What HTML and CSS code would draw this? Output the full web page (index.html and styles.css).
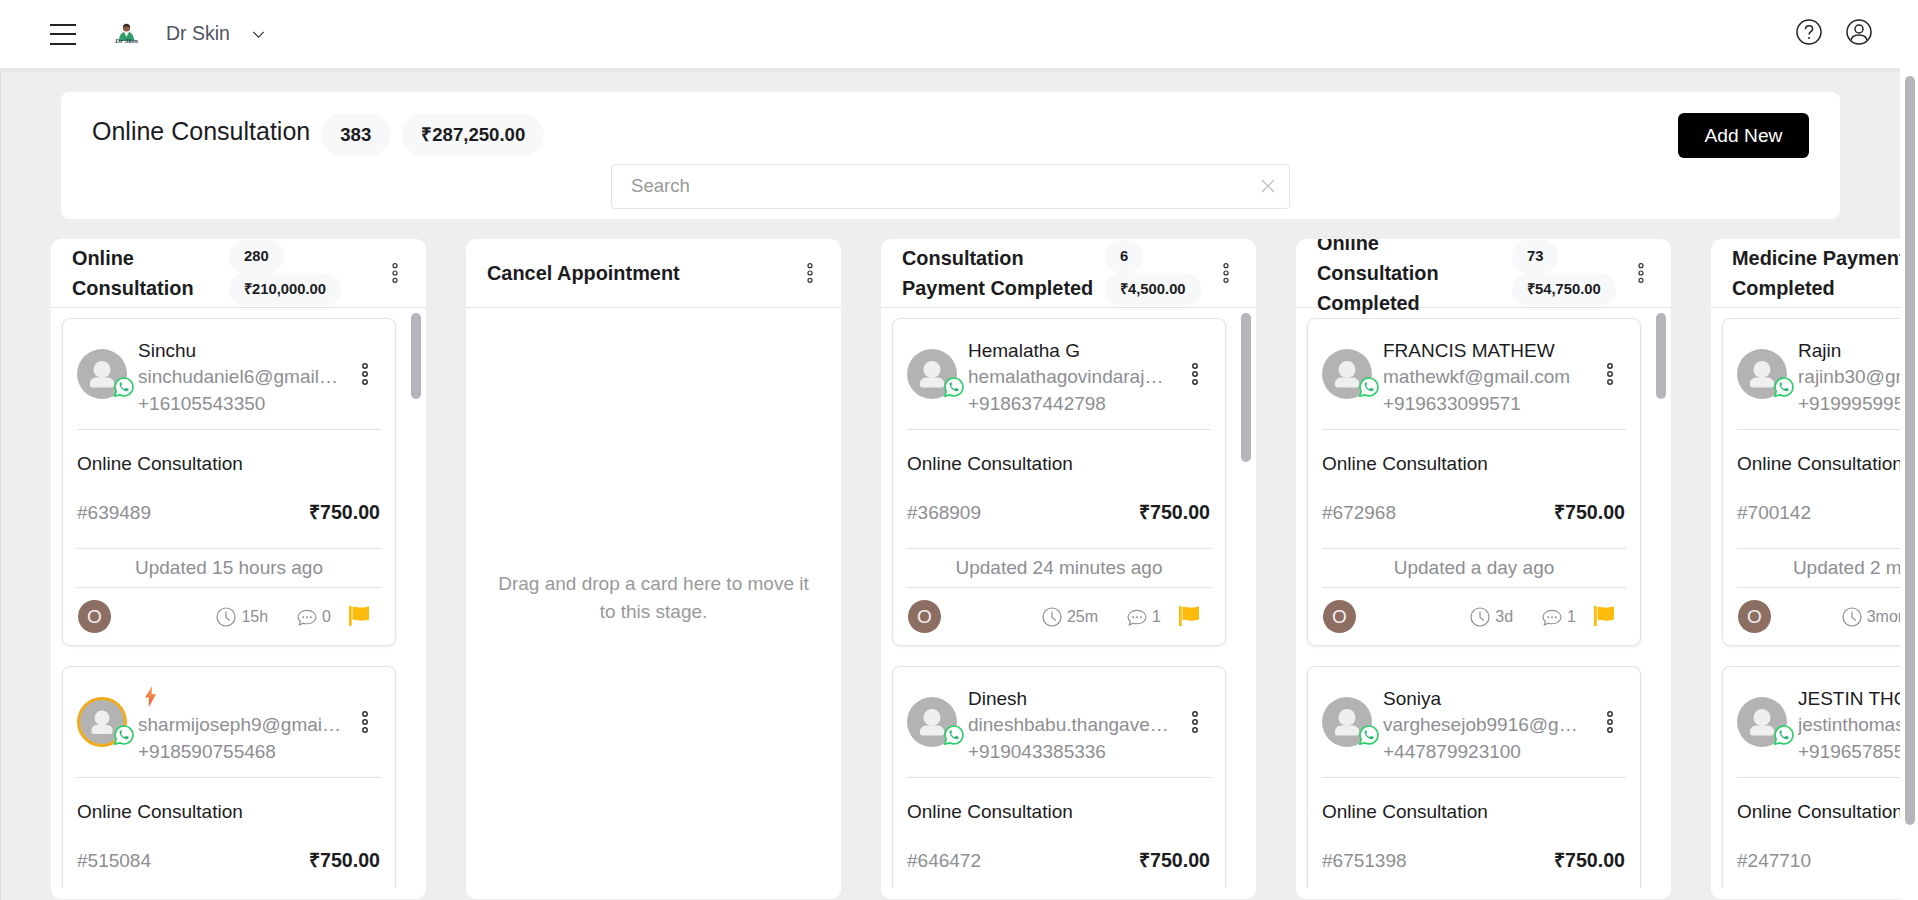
FILE: index.html
```html
<!DOCTYPE html>
<html lang="en">
<head>
  <meta charset="UTF-8">
  <title>Online Consultation</title>
  <link rel="stylesheet" href="styles.css">
</head>
<body>

  <svg class="sprite" width="0" height="0">
    <defs>
      <linearGradient id="bolt-fill" x1="0" y1="0" x2="0" y2="1">
        <stop offset="0" stop-color="#f8a24c"/>
        <stop offset="1" stop-color="#e85c3c"/>
      </linearGradient>
    </defs>
    <symbol id="i-dots" viewBox="0 0 10 24">
      <circle cx="5" cy="4" r="2.2"/><circle cx="5" cy="12" r="2.2"/><circle cx="5" cy="20" r="2.2"/>
    </symbol>
    <symbol id="i-person" viewBox="0 0 50 50">
      <circle cx="25" cy="20.500" r="8.500" fill="#efefef"/>
      <path d="M13 36v-2c0-3.500 3.500-5.500 7-5.500h10c3.500 0 7 2 7 5.500v2c0 1.500-1 2.500-2.500 2.500h-19C14 38.500 13 37.500 13 36z" fill="#efefef"/>
    </symbol>
    <symbol id="i-whatsapp" viewBox="0 0 24 24">
      <path d="M1 23l1.600-6A10.700 10.700 0 1 1 7 21.400z" fill="#fff" stroke="#2bd06a" stroke-width="2"/>
      <path d="M8.500 6.300c-.6 0-1.500.7-1.700 1.900-.3 1.700.7 4 2.500 5.900 2 2.100 4.400 3.200 6.100 3 1.300-.2 2.200-1.200 2.200-2.100 0-.4-.1-.6-.4-.8l-2.300-1.100c-.3-.1-.6-.1-.8.100l-.9 1.100c-.2.200-.4.200-.7.100-1.800-.8-3.100-2.100-3.800-3.700-.1-.3-.1-.5.100-.7l.7-.9c.2-.2.200-.5.100-.8l-.9-2.100c-.1-.3-.3-.4-.7-.4z" fill="#2bb673"/>
    </symbol>
    <symbol id="i-clock" viewBox="0 0 20 20">
      <circle cx="10" cy="10" r="9" fill="none" stroke="#8e8e93" stroke-width="1.200"/>
      <path d="M10 4.500V10.500l3.800 3" fill="none" stroke="#8e8e93" stroke-width="1.200"/>
    </symbol>
    <symbol id="i-comment" viewBox="0 0 20 18">
      <path d="M2.300 17l1.100-3.500C1.900 12.300 1 10.800 1 9.100 1 5.400 5 2.400 10 2.400s9 3 9 6.700-4 6.700-9 6.700c-1.300 0-2.600-.2-3.700-.6z" fill="none" stroke="#8e8e93" stroke-width="1.100"/>
      <circle cx="6.200" cy="9.200" r="1" fill="#8e8e93"/><circle cx="10" cy="9.200" r="1" fill="#8e8e93"/><circle cx="13.800" cy="9.200" r="1" fill="#8e8e93"/>
    </symbol>
    <symbol id="i-flag" viewBox="0 0 20 20">
      <rect x="0" y="0" width="2.700" height="20" fill="#fdbb0b"/>
      <path d="M3.500 1c3-1 5 .6 8.500.6 3 0 5-.6 8-1.300v13.200c-2.500.8-5 1.200-8 1.200-3.500 0-5.500-1.500-8.500-.6z" fill="#fdbb0b"/>
    </symbol>
    <symbol id="i-bolt" viewBox="0 0 10 19">
      <path d="M6.500 0L0 10.500h3.500L3.500 19 10 7.500H6z" fill="url(#bolt-fill)"/>
    </symbol>
  </svg>

  <header class="topbar">
    <div class="topbar-left">
      <div class="hamburger"><span></span><span></span><span></span></div>
      <svg class="logo" viewBox="0 0 27 22" width="27" height="22">
        <path d="M6 18c0-5 2-8 5-9h5c3 1 5 4 5 9z" fill="#2e9e6b"/>
        <path d="M11 9l2.500 5L16 9z" fill="#f2f2f2"/>
        <circle cx="13.500" cy="5" r="3.600" fill="#8a5a44"/>
        <path d="M9.900 4.500C10 1.500 12 .8 13.500.8S17 1.500 17.100 4.500C15 3 12 3 9.900 4.500z" fill="#3b2c28"/>
        <text class="logo-text" x="13.500" y="20">Dr Skin</text>
      </svg>
      <span class="brand">Dr Skin</span>
      <svg class="chevron" viewBox="0 0 14 8" width="13" height="7">
        <path d="M1 1l6 6 6-6" fill="none" stroke="#333" stroke-width="1.300"/>
      </svg>
    </div>
    <div class="topbar-right">
      <svg viewBox="0 0 26 26" width="26" height="26">
        <circle cx="13" cy="13" r="12" fill="none" stroke="#222" stroke-width="1.500"/>
        <path d="M9.500 10.200c0-2 1.600-3.500 3.600-3.500s3.500 1.400 3.500 3.200c0 2.600-3.600 2.800-3.600 5.600" fill="none" stroke="#222" stroke-width="1.500"/>
        <circle cx="13" cy="19" r="1" fill="#222"/>
      </svg>
      <svg viewBox="0 0 26 26" width="26" height="26">
        <circle cx="13" cy="13" r="12" fill="none" stroke="#222" stroke-width="1.500"/>
        <circle cx="13" cy="10" r="4" fill="none" stroke="#222" stroke-width="1.500"/>
        <path d="M5 21.500c.5-3.500 3.500-5.500 8-5.500s7.500 2 8 5.500" fill="none" stroke="#222" stroke-width="1.500"/>
      </svg>
    </div>
  </header>

  <main class="content">
    <section class="page-head">
      <div class="page-head-top">
        <h1>Online Consultation</h1>
        <span class="pill">383</span>
        <span class="pill">₹287,250.00</span>
        <button class="add-btn">Add New</button>
      </div>
      <div class="search">
        <span>Search</span>
        <svg viewBox="0 0 14 14" width="14" height="14"><path d="M1 1l12 12M13 1L1 13" stroke="#b9b9b9" stroke-width="1.200"/></svg>
      </div>
    </section>

    <div class="board">

      <section class="column col-one">
        <div class="col-head">
          <div class="col-title">Online Consultation</div>
          <div class="col-pills"><span class="pill-sm">280</span><span class="pill-sm">₹210,000.00</span></div>
          <svg class="col-dots"><use href="#i-dots"/></svg>
        </div>
        <div class="col-body">
          <div class="thumb"></div>
          <article class="card">
            <div class="card-top">
              <div class="avatar"><svg class="person"><use href="#i-person"/></svg><svg class="wa"><use href="#i-whatsapp"/></svg></div>
              <div class="who">
                <div class="name">Sinchu</div>
                <div class="muted">sinchudaniel6@gmail.com</div>
                <div class="muted">+16105543350</div>
              </div>
              <svg class="card-dots"><use href="#i-dots"/></svg>
            </div>
            <div class="service">Online Consultation</div>
            <div class="ref-row"><span class="muted">#639489</span><b>₹750.00</b></div>
            <div class="updated">Updated 15 hours ago</div>
            <div class="card-foot">
              <span class="owner">O</span>
              <svg class="ic"><use href="#i-clock"/></svg><span class="age">15h</span>
              <svg class="ic"><use href="#i-comment"/></svg><span class="count">0</span>
              <svg class="flag"><use href="#i-flag"/></svg>
            </div>
          </article>
          <article class="card">
            <div class="card-top">
              <div class="avatar hot"><svg class="person"><use href="#i-person"/></svg><svg class="wa"><use href="#i-whatsapp"/></svg></div>
              <div class="who">
                <div class="name"><svg class="bolt"><use href="#i-bolt"/></svg></div>
                <div class="muted">sharmijoseph9@gmail.com</div>
                <div class="muted">+918590755468</div>
              </div>
              <svg class="card-dots"><use href="#i-dots"/></svg>
            </div>
            <div class="service">Online Consultation</div>
            <div class="ref-row"><span class="muted">#515084</span><b>₹750.00</b></div>
          </article>
        </div>
      </section>

      <section class="column">
        <div class="col-head">
          <div class="col-title wide">Cancel Appointment</div>
          <svg class="col-dots"><use href="#i-dots"/></svg>
        </div>
        <div class="col-body empty">Drag and drop a card here to move it to this stage.</div>
      </section>

      <section class="column col-three">
        <div class="col-head">
          <div class="col-title">Consultation Payment Completed</div>
          <div class="col-pills"><span class="pill-sm">6</span><span class="pill-sm">₹4,500.00</span></div>
          <svg class="col-dots"><use href="#i-dots"/></svg>
        </div>
        <div class="col-body">
          <div class="thumb long"></div>
          <article class="card">
            <div class="card-top">
              <div class="avatar"><svg class="person"><use href="#i-person"/></svg><svg class="wa"><use href="#i-whatsapp"/></svg></div>
              <div class="who">
                <div class="name">Hemalatha G</div>
                <div class="muted">hemalathagovindaraj@gmail.com</div>
                <div class="muted">+918637442798</div>
              </div>
              <svg class="card-dots"><use href="#i-dots"/></svg>
            </div>
            <div class="service">Online Consultation</div>
            <div class="ref-row"><span class="muted">#368909</span><b>₹750.00</b></div>
            <div class="updated">Updated 24 minutes ago</div>
            <div class="card-foot">
              <span class="owner">O</span>
              <svg class="ic"><use href="#i-clock"/></svg><span class="age">25m</span>
              <svg class="ic"><use href="#i-comment"/></svg><span class="count">1</span>
              <svg class="flag"><use href="#i-flag"/></svg>
            </div>
          </article>
          <article class="card">
            <div class="card-top">
              <div class="avatar"><svg class="person"><use href="#i-person"/></svg><svg class="wa"><use href="#i-whatsapp"/></svg></div>
              <div class="who">
                <div class="name">Dinesh</div>
                <div class="muted">dineshbabu.thangavel@gmail.com</div>
                <div class="muted">+919043385336</div>
              </div>
              <svg class="card-dots"><use href="#i-dots"/></svg>
            </div>
            <div class="service">Online Consultation</div>
            <div class="ref-row"><span class="muted">#646472</span><b>₹750.00</b></div>
          </article>
        </div>
      </section>

      <section class="column col-four">
        <div class="col-head">
          <div class="col-title">Online Consultation Completed</div>
          <div class="col-pills"><span class="pill-sm">73</span><span class="pill-sm">₹54,750.00</span></div>
          <svg class="col-dots"><use href="#i-dots"/></svg>
        </div>
        <div class="col-body">
          <div class="thumb"></div>
          <article class="card">
            <div class="card-top">
              <div class="avatar"><svg class="person"><use href="#i-person"/></svg><svg class="wa"><use href="#i-whatsapp"/></svg></div>
              <div class="who">
                <div class="name">FRANCIS MATHEW</div>
                <div class="muted">mathewkf@gmail.com</div>
                <div class="muted">+919633099571</div>
              </div>
              <svg class="card-dots"><use href="#i-dots"/></svg>
            </div>
            <div class="service">Online Consultation</div>
            <div class="ref-row"><span class="muted">#672968</span><b>₹750.00</b></div>
            <div class="updated">Updated a day ago</div>
            <div class="card-foot">
              <span class="owner">O</span>
              <svg class="ic"><use href="#i-clock"/></svg><span class="age">3d</span>
              <svg class="ic"><use href="#i-comment"/></svg><span class="count">1</span>
              <svg class="flag"><use href="#i-flag"/></svg>
            </div>
          </article>
          <article class="card">
            <div class="card-top">
              <div class="avatar"><svg class="person"><use href="#i-person"/></svg><svg class="wa"><use href="#i-whatsapp"/></svg></div>
              <div class="who">
                <div class="name">Soniya</div>
                <div class="muted">varghesejob9916@gmail.com</div>
                <div class="muted">+447879923100</div>
              </div>
              <svg class="card-dots"><use href="#i-dots"/></svg>
            </div>
            <div class="service">Online Consultation</div>
            <div class="ref-row"><span class="muted">#6751398</span><b>₹750.00</b></div>
          </article>
        </div>
      </section>

      <section class="column col-five">
        <div class="col-head">
          <div class="col-title">Medicine Payment Completed</div>
        </div>
        <div class="col-body">
          <article class="card">
            <div class="card-top">
              <div class="avatar"><svg class="person"><use href="#i-person"/></svg><svg class="wa"><use href="#i-whatsapp"/></svg></div>
              <div class="who">
                <div class="name">Rajin</div>
                <div class="muted">rajinb30@gmail.com</div>
                <div class="muted">+919995995000</div>
              </div>
              <svg class="card-dots"><use href="#i-dots"/></svg>
            </div>
            <div class="service">Online Consultation</div>
            <div class="ref-row"><span class="muted">#700142</span><b>₹750.00</b></div>
            <div class="updated">Updated 2 months ago</div>
            <div class="card-foot">
              <span class="owner">O</span>
              <svg class="ic"><use href="#i-clock"/></svg><span class="age">3months</span>
              <svg class="ic"><use href="#i-comment"/></svg><span class="count">1</span>
              <svg class="flag"><use href="#i-flag"/></svg>
            </div>
          </article>
          <article class="card">
            <div class="card-top">
              <div class="avatar"><svg class="person"><use href="#i-person"/></svg><svg class="wa"><use href="#i-whatsapp"/></svg></div>
              <div class="who">
                <div class="name">JESTIN THOMAS</div>
                <div class="muted">jestinthomas@gmail.com</div>
                <div class="muted">+919657855000</div>
              </div>
              <svg class="card-dots"><use href="#i-dots"/></svg>
            </div>
            <div class="service">Online Consultation</div>
            <div class="ref-row"><span class="muted">#247710</span><b>₹750.00</b></div>
          </article>
        </div>
      </section>

    </div>
  </main>

  <div class="page-scroll"><div class="page-thumb"></div></div>

</body>
</html>
```

FILE: styles.css
```css
* {
  box-sizing: border-box;
}

html, body {
  height: 100%;
}

body {
  margin: 0;
  font-family: "Liberation Sans", Arial, sans-serif;
  color: #1c1c1e;
  background-color: #fff;
  overflow: hidden;
  position: relative;
}

.sprite {
  position: absolute;
}

/* Top bar */
.topbar {
  height: 68px;
  padding: 0 46px 0 50px;
  display: flex;
  justify-content: space-between;
  align-items: center;
  background-color: #fff;
}

.topbar-left {
  display: flex;
  align-items: center;
}

.hamburger {
  width: 26px;
  height: 21px;
  margin-right: 37px;
  display: flex;
  flex-direction: column;
  justify-content: space-between;
}

.hamburger span {
  height: 2px;
  background-color: #222;
}

.logo {
  margin-right: 26px;
}

.logo-text {
  font-family: "Liberation Serif", serif;
  font-size: 7px;
  font-style: italic;
  font-weight: 700;
  text-anchor: middle;
  fill: #2a3550;
}

.brand {
  font-size: 19.500px;
  color: #4f5560;
  margin-right: 22px;
  padding-bottom: 2px;
}

.topbar-right {
  display: flex;
  gap: 24px;
  padding-bottom: 5px;
}

/* Content */
.content {
  height: 832px;
  width: 1900px;
  padding-top: 20px;
  background-color: #eeeeee;
  border-top: 4px solid #e8e8e8;
  border-left: 1px solid #dddddd;
  overflow: hidden;
}

.page-head {
  width: 1779px;
  height: 127px;
  margin-left: 60px;
  padding: 21px 31px 0;
  background-color: #fff;
  border-radius: 8px;
}

.page-head-top {
  display: flex;
  align-items: center;
  height: 45px;
}

.page-head h1 {
  margin: -8px 11px 0 0;
  font-size: 25px;
  font-weight: 400;
}

.pill {
  padding: 0 19px;
  height: 42px;
  line-height: 42px;
  margin: -2px 12px 0 0;
  border-radius: 21px;
  font-size: 18.600px;
  font-weight: 700;
  background-color: #f6f8fa;
}

.add-btn {
  margin-left: auto;
  width: 131px;
  height: 45px;
  border: none;
  border-radius: 6px;
  font-family: inherit;
  font-size: 19.200px;
  color: #fff;
  background-color: #000;
}

.search {
  width: 679px;
  height: 45px;
  margin: 6px 0 0 519px;
  padding: 0 14px 2px 19px;
  display: flex;
  justify-content: space-between;
  align-items: center;
  border: 1px solid #e4e4e4;
  border-radius: 4px;
  font-size: 18.600px;
  color: #999;
}

/* Board */
.board {
  display: flex;
  gap: 40px;
  margin: 20px 0 0 50px;
}

.column {
  position: relative;
  flex: none;
  width: 375px;
  height: 660px;
  background-color: #fff;
  border-radius: 10px;
  overflow: hidden;
}

.col-head {
  height: 69px;
  padding-left: 21px;
  display: flex;
  align-items: center;
  border-bottom: 1px solid #e2e2e2;
}

.col-title {
  flex: none;
  width: 145px;
  margin-right: 12px;
  font-size: 19.900px;
  line-height: 30px;
  font-weight: 700;
}

.col-title.wide {
  width: 306px;
  margin-right: 12px;
}

.col-three .col-title {
  width: 203px;
  margin-right: 0;
}

.col-four .col-title {
  width: 183px;
}

.col-five .col-title {
  width: 240px;
}

.col-pills {
  flex: none;
  width: 161px;
  display: flex;
  flex-direction: column;
  align-items: flex-start;
}

.col-three .col-pills {
  width: 116px;
}

.col-four .col-pills {
  width: 124px;
}

.pill-sm {
  height: 33px;
  line-height: 33px;
  padding: 0 15px;
  border-radius: 16px;
  font-size: 14.800px;
  font-weight: 700;
  background-color: #f6f8fa;
}

.col-dots {
  width: 10px;
  height: 22px;
  fill: none;
  stroke: #333;
  stroke-width: 1.300;
}

.col-body {
  position: relative;
  height: 580px;
  padding: 10px 30px 0 11px;
  overflow: hidden;
}

.empty {
  padding: 0 30px;
  display: flex;
  align-items: center;
  text-align: center;
  font-size: 19px;
  line-height: 28px;
  color: #999;
}

.thumb {
  position: absolute;
  top: 5px;
  right: 5px;
  width: 10px;
  height: 86px;
  border-radius: 5px;
  background-color: #b5b5bb;
}

.thumb.long {
  height: 149px;
}

/* Cards */
.card {
  margin-bottom: 20px;
  padding: 0 14px;
  background-color: #fff;
  border: 1px solid #e3e3e3;
  border-radius: 8px;
  box-shadow: 0 1px 3px rgba(0, 0, 0, 0.08);
}

.card-top {
  height: 111px;
  display: flex;
  align-items: center;
  border-bottom: 1px solid #e0e0e0;
}

.avatar {
  position: relative;
  flex: none;
  width: 50px;
  height: 50px;
  margin-right: 11px;
  border-radius: 50%;
  background-color: #b3b3b3;
}

.avatar.hot {
  border: 3px solid #f0ab1f;
}

.person {
  width: 100%;
  height: 100%;
}

.wa {
  position: absolute;
  right: -7px;
  bottom: 2px;
  width: 20px;
  height: 20px;
}

.avatar.hot .wa {
  right: -10px;
  bottom: -1px;
}

.who {
  flex: none;
  width: 203.500px;
  margin: 7px 18.500px 0 0;
  font-size: 19px;
  line-height: 26.500px;
}

.name {
  height: 26.500px;
}

.muted {
  color: #8e8e93;
  white-space: nowrap;
  overflow: hidden;
  text-overflow: ellipsis;
}

.bolt {
  width: 11px;
  height: 21px;
  margin-left: 7px;
}

.card-dots {
  flex: none;
  width: 10px;
  height: 24px;
  margin-bottom: 1px;
  fill: none;
  stroke: #333;
  stroke-width: 1.500;
}

.service {
  margin-top: 20px;
  font-size: 19px;
  line-height: 27px;
}

.ref-row {
  margin-top: 22px;
  display: flex;
  justify-content: space-between;
  font-size: 19px;
  line-height: 27px;
  padding-bottom: 22px;
  border-bottom: 1px solid #e0e0e0;
}

.ref-row b {
  font-size: 19.600px;
  margin-right: 1px;
}

.updated {
  height: 39px;
  line-height: 38px;
  text-align: center;
  font-size: 19px;
  color: #8e8e93;
  border-bottom: 1px solid #e0e0e0;
}

.card-foot {
  height: 57px;
  display: flex;
  align-items: center;
  font-size: 16px;
  color: #8e8e93;
}

.owner {
  flex: none;
  width: 33px;
  height: 33px;
  margin: 0 auto 0 1px;
  border-radius: 50%;
  text-align: center;
  line-height: 33px;
  font-size: 19px;
  color: #f4f0ee;
  background-color: #8d6e63;
}

.ic {
  flex: none;
  width: 20px;
  height: 20px;
  margin-right: 5px;
}

.age {
  margin-right: 29px;
}

.count {
  margin-right: 18px;
}

.flag {
  flex: none;
  width: 20px;
  height: 20px;
  margin-right: 12px;
  margin-bottom: 2px;
}

/* Window scrollbar */
.page-scroll {
  position: absolute;
  top: 68px;
  right: 0;
  bottom: 0;
  width: 18px;
  background-color: #fff;
}

.page-thumb {
  position: absolute;
  top: 8px;
  left: 5px;
  width: 10px;
  height: 749px;
  border-radius: 5px;
  background-color: #b5b5bb;
}
```
